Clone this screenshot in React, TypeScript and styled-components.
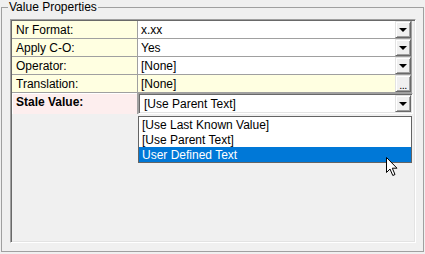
import React from 'react'
import styled, { createGlobalStyle } from 'styled-components'

const GlobalStyle = createGlobalStyle`
    html, body {
        margin: 0;
        padding: 0;
        background: #f0f0f0;
    }
    body {
        font-family: "Liberation Sans", Arial, sans-serif;
        font-size: 12px;
        color: #000;
    }
`

const Window = styled.div`
    width: 425px;
    height: 254px;
    box-sizing: border-box;
    padding: 0 1px;
    background: #f0f0f0;
    overflow: hidden;
`

const GroupBox = styled.fieldset`
    margin: 0;
    box-sizing: border-box;
    width: 423px;
    height: 252px;
    border: 1px solid #a0a0a0;
    padding: 5px 7px 7px 8px;
    min-width: 0;
`

const Legend = styled.legend`
    margin-left: -2px;
    padding: 0 1px;
    line-height: 14px;
    font-size: 12px;
`

const PropertyGrid = styled.div`
    box-sizing: border-box;
    height: 224px;
    border-top: 1px solid #a0a0a0;
    border-left: 1px solid #a0a0a0;
    border-right: 1px solid #fff;
    border-bottom: 1px solid #fff;
    box-shadow: inset 1px 1px 0 #696969, inset -1px -1px 0 #e3e3e3;
    padding: 1px;
    background: #f0f0f0;
`

const Row = styled.div`
    box-sizing: border-box;
    width: 400px;
    height: 18px;
    display: grid;
    grid-template-columns: 126px 1fr;
    border-bottom: 1px solid #a0a0a0;
    border-right: 1px solid #a0a0a0;
`

const LabelCell = styled.div<{ $active?: boolean }>`
    box-sizing: border-box;
    border-right: 1px solid #a0a0a0;
    background: ${(p) => (p.$active ? '#fdeeee' : '#ffffe1')};
    font-weight: ${(p) => (p.$active ? 'bold' : 'normal')};
    padding: 1px 0 0 4px;
    line-height: 16px;
    white-space: nowrap;
    ${(p) => p.$active && 'box-shadow: inset 1px 1px 0 #fff;'}
`

const ValueCell = styled.div<{ $tint?: boolean }>`
    position: relative;
    display: flex;
    align-items: stretch;
    justify-content: space-between;
    background: ${(p) => (p.$tint ? '#ffffe1' : '#fff')};
    line-height: 16px;
`

const ValueText = styled.span`
    padding: 1px 0 0 3px;
    white-space: nowrap;
`

const DropButton = styled.div`
    box-sizing: border-box;
    width: 16px;
    height: 17px;
    flex: none;
    background: #f0f0f0;
    border-top: 1px solid #e3e3e3;
    border-left: 1px solid #e3e3e3;
    border-right: 1px solid #696969;
    border-bottom: 1px solid #696969;
    box-shadow: inset 1px 1px 0 #fff, inset -1px -1px 0 #a0a0a0;
    display: flex;
    align-items: center;
    justify-content: center;
    font-size: 11px;
    line-height: 11px;
`

const Arrow = styled.span`
    width: 0;
    height: 0;
    margin-top: 1px;
    border-left: 4px solid transparent;
    border-right: 4px solid transparent;
    border-top: 4px solid #000;
`

const Dots = styled.span`
    margin-top: 4px;
    letter-spacing: -0.5px;
`

const Combo = styled.div`
    box-sizing: border-box;
    width: calc(100% + 2px);
    height: 21px;
    margin-right: -2px;
    display: flex;
    justify-content: space-between;
    background: #fff;
    border-top: 1px solid #a0a0a0;
    border-left: 1px solid #a0a0a0;
    border-right: 1px solid #fff;
    border-bottom: 1px solid #fff;
    box-shadow: inset 1px 1px 0 #696969, inset -1px -1px 0 #e3e3e3;
    padding: 1px;
    line-height: 17px;
    position: relative;
    z-index: 1;
`

const ComboText = styled.span`
    padding: 1px 0 0 4px;
    line-height: 16px;
    white-space: nowrap;
`

const ListBox = styled.div`
    position: absolute;
    left: 0;
    top: 23px;
    box-sizing: border-box;
    width: 274px;
    border: 1px solid #646464;
    background: #fff;
    z-index: 2;
`

const ListItem = styled.div<{ $selected?: boolean }>`
    box-sizing: border-box;
    height: 15px;
    line-height: 15px;
    padding: 1px 0 0 3px;
    white-space: nowrap;
    overflow: visible;
    background: ${(p) => (p.$selected ? '#0078d7' : '#fff')};
    color: ${(p) => (p.$selected ? '#fff' : '#000')};
`

const Cursor = styled.svg`
    position: absolute;
    left: 247px;
    top: 40px;
    z-index: 3;
`

const rows = [
    { label: 'Nr Format:', value: 'x.xx', kind: 'drop' },
    { label: 'Apply C-O:', value: 'Yes', kind: 'drop' },
    { label: 'Operator:', value: '[None]', kind: 'drop' },
    { label: 'Translation:', value: '[None]', kind: 'dots' },
]

const staleOptions = ['[Use Last Known Value]', '[Use Parent Text]', 'User Defined Text']

const App = () => {
    return (
        <Window>
            <GlobalStyle />
            <GroupBox>
                <Legend>Value Properties</Legend>
                <PropertyGrid>
                    {rows.map((row) => (
                        <Row key={row.label}>
                            <LabelCell>{row.label}</LabelCell>
                            <ValueCell $tint={row.kind === 'dots'}>
                                <ValueText>{row.value}</ValueText>
                                <DropButton>{row.kind === 'dots' ? <Dots>...</Dots> : <Arrow />}</DropButton>
                            </ValueCell>
                        </Row>
                    ))}
                    <Row>
                        <LabelCell $active>Stale Value:</LabelCell>
                        <ValueCell>
                            <Combo>
                                <ComboText>[Use Parent Text]</ComboText>
                                <DropButton>
                                    <Arrow />
                                </DropButton>
                            </Combo>
                            <ListBox>
                                {staleOptions.map((opt, i) => (
                                    <ListItem key={opt} $selected={i === 2}>
                                        {opt}
                                    </ListItem>
                                ))}
                                <Cursor width="13" height="20" viewBox="0 0 13 20">
                                    <path
                                        d="M0.5 0.5 L0.5 15.5 L4 12 L6.8 18.5 L9 17.5 L6.3 11.2 L11 11.2 Z"
                                        fill="#fff"
                                        stroke="#000"
                                        strokeWidth="1"
                                    />
                                </Cursor>
                            </ListBox>
                        </ValueCell>
                    </Row>
                </PropertyGrid>
            </GroupBox>
        </Window>
    )
}

export default App
